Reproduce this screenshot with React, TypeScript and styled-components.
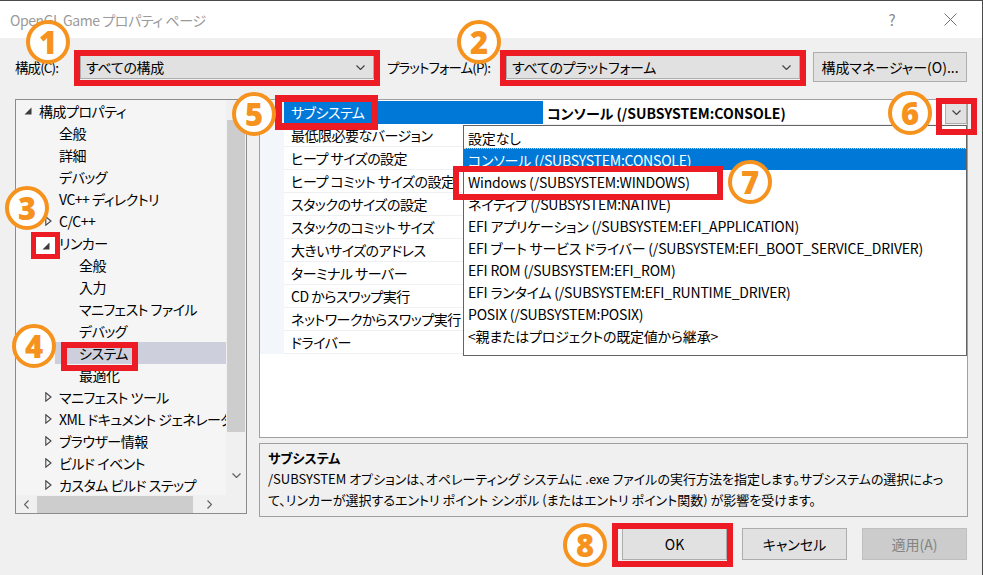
import styled, { createGlobalStyle } from 'styled-components';

const GlobalStyle = createGlobalStyle`
  html, body {
    margin: 0;
    padding: 0;
    background: #f0f0f0;
  }
  body {
    font-family: "Noto Sans CJK JP", "Noto Sans", sans-serif;
    font-feature-settings: "palt" 1;
    font-size: 14px;
    color: #000;
  }
  #root {
    width: 983px;
    height: 575px;
    overflow: hidden;
  }
`;

const Window = styled.div`
  position: relative;
  width: 983px;
  height: 575px;
  box-sizing: border-box;
  border-top: 1px solid #4a4a4a;
  border-right: 1px solid #4a4a4a;
  background: #f0f0f0;
  overflow: hidden;
`;

const TitleBar = styled.div`
  height: 37px;
  background: #fff;
  display: flex;
  align-items: center;
  padding: 0 3px 0 10px;
`;

const Title = styled.div`
  flex: 1;
  color: #9a9a9a;
  font-size: 14px;
  letter-spacing: -0.4px;
`;

const TitleButton = styled.div`
  width: 58px;
  height: 37px;
  display: flex;
  align-items: center;
  justify-content: center;
  color: #8a8a8a;
  font-size: 15px;
`;

const TopRow = styled.div`
  height: 58px;
  padding: 0 0 2px 15px;
  display: flex;
  align-items: center;
`;

const Label = styled.div<{ $w: number; $ml?: number }>`
  width: ${p => p.$w}px;
  margin-left: ${p => p.$ml ?? 0}px;
  white-space: nowrap;
  font-size: 13.5px;
  letter-spacing: -0.9px;
`;

const Combo = styled.div`
  width: 294px;
  height: 24px;
  box-sizing: border-box;
  background: #e1e1e1;
  border: 1px solid #adadad;
  display: flex;
  align-items: center;
  justify-content: space-between;
  padding: 0 8px 0 5px;
  letter-spacing: -0.3px;
`;

const Button = styled.div<{ $w: number; $disabled?: boolean }>`
  width: ${p => p.$w}px;
  height: 32px;
  box-sizing: border-box;
  display: flex;
  align-items: center;
  justify-content: center;
  background: ${p => (p.$disabled ? '#cccccc' : '#e1e1e1')};
  border: 1px solid ${p => (p.$disabled ? '#bfbfbf' : '#adadad')};
  color: ${p => (p.$disabled ? '#838383' : '#000')};
  white-space: nowrap;
`;

const ManagerButton = styled(Button)`
  height: 30px;
  margin-left: 13px;
`;

const Main = styled.div`
  display: flex;
  gap: 12px;
  padding-left: 15px;
  margin-top: 1px;
  height: 418px;
`;

const TreePanel = styled.div`
  width: 232px;
  height: 415px;
  box-sizing: border-box;
  border: 1px solid #8c8c8c;
  background: #f5f5f5;
  display: grid;
  grid-template-columns: 1fr 20px;
  grid-template-rows: 1fr 18px;
`;

const TreeContent = styled.div`
  overflow: hidden;
`;

const TreeRow = styled.div<{ $level: number; $selected?: boolean }>`
  height: 22px;
  display: flex;
  align-items: center;
  margin-left: ${p => p.$level * 20 - 1}px;
  padding-left: 5px;
  background: ${p => (p.$selected ? '#cdd0dc' : 'transparent')};
  white-space: nowrap;
  letter-spacing: -0.5px;
`;

const Toggle = styled.span`
  width: 16px;
  flex: none;
  display: flex;
  align-items: center;
  justify-content: center;
  margin-right: 3px;
`;

const VScroll = styled.div`
  background: #f0f0f0;
  display: flex;
  flex-direction: column;
  align-items: center;
  padding-top: 20px;
`;

const VThumb = styled.div`
  width: 18px;
  height: 312px;
  background: #cdcdcd;
`;

const ScrollArrow = styled.div`
  height: 20px;
  display: flex;
  align-items: center;
  justify-content: center;
  margin-top: auto;
  padding-bottom: 10px;
`;

const HScroll = styled.div`
  background: #f0f0f0;
  display: flex;
  align-items: center;
  padding-left: 8px;
`;

const HThumb = styled.div`
  width: 156px;
  height: 17px;
  background: #cdcdcd;
  margin: 0 14px 0 8px;
`;

const Corner = styled.div`
  background: #f0f0f0;
`;

const RightCol = styled.div`
  width: 709px;
  display: flex;
  flex-direction: column;
  gap: 5px;
`;

const Grid = styled.div`
  position: relative;
  height: 339px;
  box-sizing: border-box;
  border: 1px solid #a0a0a0;
  background: #fff;
  padding-top: 1px;
`;

const GridRow = styled.div`
  display: grid;
  grid-template-columns: 24px 259px 1fr;
  height: 23px;
`;

const Gutter = styled.div`
  background: #f3f6fb;
`;

const NameCell = styled.div<{ $selected?: boolean }>`
  box-sizing: border-box;
  padding-left: 7px;
  line-height: 22px;
  border-bottom: 1px solid #eef0f4;
  background: ${p => (p.$selected ? '#0078d7' : '#fff')};
  color: ${p => (p.$selected ? '#fff' : '#000')};
  white-space: nowrap;
  overflow: hidden;
  letter-spacing: -0.5px;
`;

const ValueCell = styled.div<{ $bold?: boolean }>`
  box-sizing: border-box;
  display: flex;
  align-items: center;
  justify-content: space-between;
  padding-left: 4px;
  border-bottom: 1px solid #eef0f4;
  font-weight: ${p => (p.$bold ? 700 : 400)};
  white-space: nowrap;
`;

const DropButton = styled.div`
  width: 22px;
  height: 23px;
  box-sizing: border-box;
  background: #e1e1e1;
  border: 1px solid #adadad;
  display: flex;
  align-items: center;
  justify-content: center;
`;

const DropList = styled.div`
  position: absolute;
  left: 203px;
  top: 25px;
  width: 504px;
  height: 231px;
  box-sizing: border-box;
  border: 1px solid #646464;
  background: #fff;
`;

const DropItem = styled.div<{ $selected?: boolean }>`
  height: 22px;
  line-height: 22px;
  padding-left: 4px;
  white-space: nowrap;
  box-sizing: border-box;
  letter-spacing: -0.2px;
  background: ${p => (p.$selected ? '#0078d7' : 'transparent')};
  color: ${p => (p.$selected ? '#fff' : '#000')};
  border-top: 1px dotted ${p => (p.$selected ? '#f5c58a' : 'transparent')};
`;

const Desc = styled.div`
  height: 74px;
  box-sizing: border-box;
  border: 1px solid #a0a0a0;
  padding: 3px 8px;
  font-size: 13px;
  line-height: 21px;
  white-space: nowrap;
  overflow: hidden;
`;

const DescTitle = styled.div`
  font-weight: 700;
`;

const Footer = styled.div`
  display: flex;
  justify-content: flex-end;
  gap: 15px;
  padding: 11px 15px 0 0;
`;

const Badge = styled.div<{ $x: number; $y: number }>`
  position: absolute;
  left: ${p => p.$x - 22}px;
  top: ${p => p.$y - 22}px;
  width: 44px;
  height: 44px;
  box-sizing: border-box;
  border-radius: 50%;
  border: 4.5px solid #f6921e;
  background: #fff;
  color: #f6921e;
  font-family: "Open Sans", "Liberation Sans", sans-serif;
  font-weight: 800;
  font-size: 31px;
  line-height: 1;
  display: flex;
  align-items: center;
  justify-content: center;
`;

const Mark = styled.div<{ $x: number; $y: number; $w: number; $h: number; $t?: number; $fill?: string }>`
  position: absolute;
  left: ${p => p.$x}px;
  top: ${p => p.$y}px;
  width: ${p => p.$w}px;
  height: ${p => p.$h}px;
  box-sizing: border-box;
  border: ${p => p.$t ?? 6}px solid #ed1c24;
  background: ${p => p.$fill ?? 'transparent'};
  display: flex;
  align-items: center;
  justify-content: center;
  pointer-events: none;
`;

function Chevron({ dir = 'down', color = '#444' }: { dir?: 'down' | 'left' | 'right'; color?: string }) {
  const pts = dir === 'down' ? '0.5,0.5 4.5,4.5 8.5,0.5' : dir === 'left' ? '4.5,0.5 0.5,4.5 4.5,8.5' : '0.5,0.5 4.5,4.5 0.5,8.5';
  const w = dir === 'down' ? 9 : 5;
  const h = dir === 'down' ? 5 : 9;
  return (
    <svg width={w} height={h} viewBox={`0 0 ${w} ${h}`}>
      <polyline points={pts} fill="none" stroke={color} strokeWidth="1.2" />
    </svg>
  );
}

function Expander({ open }: { open: boolean }) {
  return open ? (
    <svg width="8" height="8" viewBox="0 0 8 8">
      <polygon points="7.5,0.5 7.5,7.5 0.5,7.5" fill="#3c3c3c" />
    </svg>
  ) : (
    <svg width="7" height="10" viewBox="0 0 7 10">
      <polygon points="0.8,0.8 6,5 0.8,9.2" fill="none" stroke="#444" strokeWidth="1.1" />
    </svg>
  );
}

type TreeItem = { label: string; level: number; toggle?: 'open' | 'closed'; selected?: boolean };

const treeItems: TreeItem[] = [
  { label: '構成プロパティ', level: 0, toggle: 'open' },
  { label: '全般', level: 1 },
  { label: '詳細', level: 1 },
  { label: 'デバッグ', level: 1 },
  { label: 'VC++ ディレクトリ', level: 1 },
  { label: 'C/C++', level: 1, toggle: 'closed' },
  { label: 'リンカー', level: 1, toggle: 'open' },
  { label: '全般', level: 2 },
  { label: '入力', level: 2 },
  { label: 'マニフェスト ファイル', level: 2 },
  { label: 'デバッグ', level: 2 },
  { label: 'システム', level: 2, selected: true },
  { label: '最適化', level: 2 },
  { label: 'マニフェスト ツール', level: 1, toggle: 'closed' },
  { label: 'XML ドキュメント ジェネレータ', level: 1, toggle: 'closed' },
  { label: 'ブラウザー情報', level: 1, toggle: 'closed' },
  { label: 'ビルド イベント', level: 1, toggle: 'closed' },
  { label: 'カスタム ビルド ステップ', level: 1, toggle: 'closed' },
];

const properties = [
  '最低限必要なバージョン',
  'ヒープ サイズの設定',
  'ヒープ コミット サイズの設定',
  'スタックのサイズの設定',
  'スタックのコミット サイズ',
  '大きいサイズのアドレス',
  'ターミナル サーバー',
  'CD からスワップ実行',
  'ネットワークからスワップ実行',
  'ドライバー',
];

const options = [
  '設定なし',
  'コンソール (/SUBSYSTEM:CONSOLE)',
  'Windows (/SUBSYSTEM:WINDOWS)',
  'ネイティブ (/SUBSYSTEM:NATIVE)',
  'EFI アプリケーション (/SUBSYSTEM:EFI_APPLICATION)',
  'EFI ブート サービス ドライバー (/SUBSYSTEM:EFI_BOOT_SERVICE_DRIVER)',
  'EFI ROM (/SUBSYSTEM:EFI_ROM)',
  'EFI ランタイム (/SUBSYSTEM:EFI_RUNTIME_DRIVER)',
  'POSIX (/SUBSYSTEM:POSIX)',
  '<親またはプロジェクトの既定値から継承>',
];

export default function App() {
  return (
    <>
      <GlobalStyle />
      <Window>
        <TitleBar>
          <Title>OpenGL Game プロパティ ページ</Title>
          <TitleButton>?</TitleButton>
          <TitleButton>
            <svg width="13" height="13" viewBox="0 0 13 13">
              <path d="M0.5 0.5L12.5 12.5M12.5 0.5L0.5 12.5" stroke="#707070" strokeWidth="1" />
            </svg>
          </TitleButton>
        </TitleBar>

        <TopRow>
          <Label $w={65}>構成(C):</Label>
          <Combo>
            <span>すべての構成</span>
            <Chevron />
          </Combo>
          <Label $w={119} $ml={13}>プラットフォーム(P):</Label>
          <Combo>
            <span>すべてのプラットフォーム</span>
            <Chevron />
          </Combo>
          <ManagerButton $w={154}>構成マネージャー(O)...</ManagerButton>
        </TopRow>

        <Main>
          <TreePanel>
            <TreeContent>
              {treeItems.map((item, i) => (
                <TreeRow key={i} $level={item.level} $selected={item.selected}>
                  <Toggle>{item.toggle && <Expander open={item.toggle === 'open'} />}</Toggle>
                  <span>{item.label}</span>
                </TreeRow>
              ))}
            </TreeContent>
            <VScroll>
              <VThumb />
              <ScrollArrow>
                <Chevron color="#606060" />
              </ScrollArrow>
            </VScroll>
            <HScroll>
              <Chevron dir="left" color="#606060" />
              <HThumb />
              <Chevron dir="right" color="#606060" />
            </HScroll>
            <Corner />
          </TreePanel>

          <RightCol>
            <Grid>
              <GridRow>
                <Gutter />
                <NameCell $selected>サブシステム</NameCell>
                <ValueCell $bold>
                  <span>コンソール (/SUBSYSTEM:CONSOLE)</span>
                  <DropButton>
                    <Chevron />
                  </DropButton>
                </ValueCell>
              </GridRow>
              {properties.map(name => (
                <GridRow key={name}>
                  <Gutter />
                  <NameCell>{name}</NameCell>
                  <ValueCell />
                </GridRow>
              ))}
              <DropList>
                {options.map((o, i) => (
                  <DropItem key={o} $selected={i === 1}>
                    {o}
                  </DropItem>
                ))}
              </DropList>
            </Grid>
            <Desc>
              <DescTitle>サブシステム</DescTitle>
              <div>/SUBSYSTEM オプションは、オペレーティング システムに .exe ファイルの実行方法を指定します。サブシステムの選択によっ</div>
              <div>て、リンカーが選択するエントリ ポイント シンボル (またはエントリ ポイント関数) が影響を受けます。</div>
            </Desc>
          </RightCol>
        </Main>

        <Footer>
          <Button $w={105}>OK</Button>
          <Button $w={105}>キャンセル</Button>
          <Button $w={105} $disabled>適用(A)</Button>
        </Footer>

        <Mark $x={74} $y={49} $w={306} $h={36} />
        <Mark $x={500} $y={49} $w={306} $h={36} />
        <Mark $x={31} $y={231} $w={29} $h={27} $t={5} $fill="#fff">
          <Expander open />
        </Mark>
        <Mark $x={61} $y={341} $w={77} $h={29} />
        <Mark $x={275} $y={94} $w={103} $h={35} $t={7} />
        <Mark $x={936} $y={97} $w={41} $h={37} />
        <Mark $x={453} $y={165} $w={270} $h={34} />
        <Mark $x={612} $y={522} $w={121} $h={44} />

        <Badge $x={48} $y={41}>1</Badge>
        <Badge $x={479} $y={41}>2</Badge>
        <Badge $x={27} $y={207}>3</Badge>
        <Badge $x={34} $y={345}>4</Badge>
        <Badge $x={254} $y={113}>5</Badge>
        <Badge $x={910} $y={112}>6</Badge>
        <Badge $x={750} $y={181}>7</Badge>
        <Badge $x={585} $y={544}>8</Badge>
      </Window>
    </>
  );
}
